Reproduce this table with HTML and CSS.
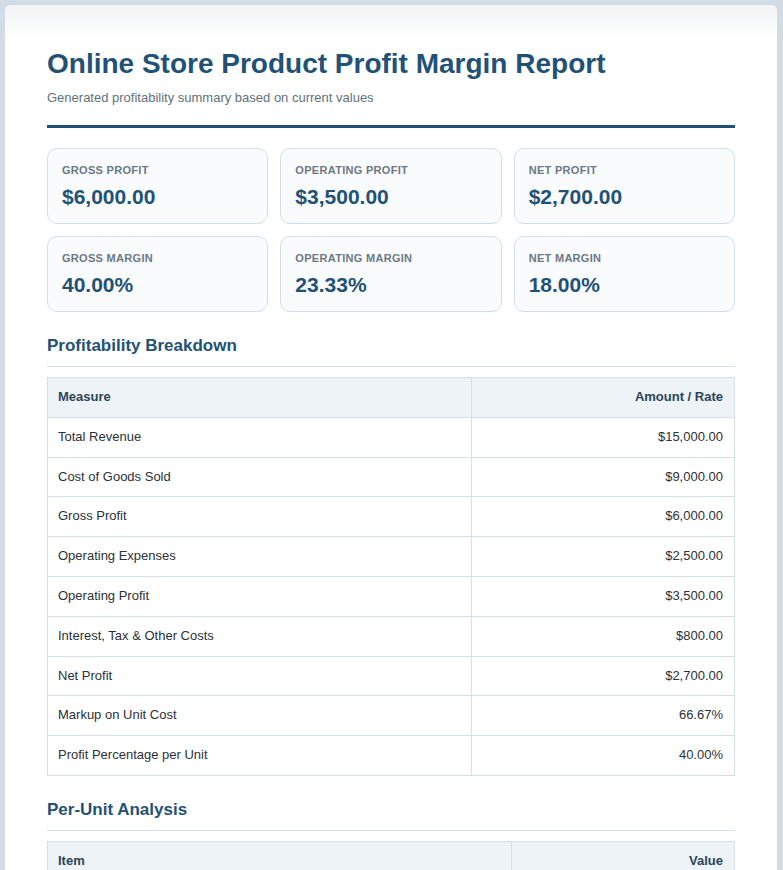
FILE: index.html
```html
<!DOCTYPE html>
<html lang="en">
<head>
<meta charset="utf-8">
<title>Online Store Product Profit Margin Report</title>
<link rel="stylesheet" href="styles.css">
</head>
<body>
<main class="report">
  <header class="report-header">
    <h1 class="report-title">Online Store Product Profit Margin Report</h1>
    <p class="report-subtitle">Generated profitability summary based on current values</p>
  </header>

  <section class="metrics">
    <div class="metric"><div class="metric-label">Gross Profit</div><div class="metric-value">$6,000.00</div></div>
    <div class="metric"><div class="metric-label">Operating Profit</div><div class="metric-value">$3,500.00</div></div>
    <div class="metric"><div class="metric-label">Net Profit</div><div class="metric-value">$2,700.00</div></div>
    <div class="metric"><div class="metric-label">Gross Margin</div><div class="metric-value">40.00%</div></div>
    <div class="metric"><div class="metric-label">Operating Margin</div><div class="metric-value">23.33%</div></div>
    <div class="metric"><div class="metric-label">Net Margin</div><div class="metric-value">18.00%</div></div>
  </section>

  <section class="section">
    <h2 class="section-title">Profitability Breakdown</h2>
    <table class="data-table">
      <colgroup><col class="col-breakdown"><col></colgroup>
      <thead>
        <tr><th>Measure</th><th class="num">Amount / Rate</th></tr>
      </thead>
      <tbody>
        <tr><td>Total Revenue</td><td class="num">$15,000.00</td></tr>
        <tr><td>Cost of Goods Sold</td><td class="num">$9,000.00</td></tr>
        <tr><td>Gross Profit</td><td class="num">$6,000.00</td></tr>
        <tr><td>Operating Expenses</td><td class="num">$2,500.00</td></tr>
        <tr><td>Operating Profit</td><td class="num">$3,500.00</td></tr>
        <tr><td>Interest, Tax &amp; Other Costs</td><td class="num">$800.00</td></tr>
        <tr><td>Net Profit</td><td class="num">$2,700.00</td></tr>
        <tr><td>Markup on Unit Cost</td><td class="num">66.67%</td></tr>
        <tr><td>Profit Percentage per Unit</td><td class="num">40.00%</td></tr>
      </tbody>
    </table>
  </section>

  <section class="section">
    <h2 class="section-title">Per-Unit Analysis</h2>
    <table class="data-table">
      <colgroup><col class="col-unit"><col></colgroup>
      <thead>
        <tr><th>Item</th><th class="num">Value</th></tr>
      </thead>
      <tbody>
        <tr><td>Selling Price per Unit</td><td class="num">$50.00</td></tr>
        <tr><td>Cost per Unit</td><td class="num">$30.00</td></tr>
        <tr><td>Profit per Unit</td><td class="num">$20.00</td></tr>
      </tbody>
    </table>
  </section>
</main>
</body>
</html>
```

FILE: styles.css
```css
* { box-sizing: border-box; }

html, body {
  margin: 0;
  padding: 0;
}

body {
  background: #d2dce4;
  font-family: "Liberation Sans", Arial, sans-serif;
  color: #2b3138;
  padding: 5px 6px 0 5px;
}

.report {
  background: linear-gradient(to bottom, #f1f3f4 0px, #ffffff 34px);
  border-radius: 5px;
  padding: 43px 42px 42px;
}

.report-header {
  border-bottom: 3px solid #1f5276;
  padding-bottom: 20px;
  margin-bottom: 20px;
}

.report-title {
  margin: 0;
  font-size: 28px;
  font-weight: bold;
  color: #1f5276;
  line-height: 31px;
}

.report-subtitle {
  margin: 11px 0 0;
  font-size: 13px;
  color: #63717d;
  line-height: 15px;
}

.metrics {
  display: grid;
  grid-template-columns: repeat(3, 1fr);
  gap: 12px;
}

.metric {
  background: #f9fbfd;
  border: 1px solid #d5dfe7;
  border-radius: 10px;
  padding: 15px 14px 13px;
  height: 76px;
}

.metric-label {
  font-size: 11px;
  font-weight: bold;
  color: #6b7985;
  text-transform: uppercase;
  letter-spacing: 0.3px;
  line-height: 13px;
}

.metric-value {
  margin-top: 8px;
  font-size: 21px;
  font-weight: bold;
  color: #1f5276;
  line-height: 24px;
}

.section {
  margin-top: 24px;
}

.section-title {
  margin: 0 0 10px;
  font-size: 17px;
  font-weight: bold;
  color: #1f5276;
  line-height: 20px;
  padding-bottom: 10px;
  border-bottom: 1px solid #d7e0e7;
}

.data-table {
  width: 100%;
  border-collapse: collapse;
  font-size: 13px;
}

.col-breakdown { width: 424px; }
.col-unit { width: 464px; }

.data-table th,
.data-table td {
  border: 1px solid #d5dfe7;
  padding: 12px 11px 12px 10px;
  line-height: 14.8px;
  text-align: left;
}

.data-table th {
  background: #edf3f7;
  color: #2c4558;
  font-weight: bold;
}

.data-table td {
  color: #2b3138;
}

.data-table .num {
  text-align: right;
}
```
